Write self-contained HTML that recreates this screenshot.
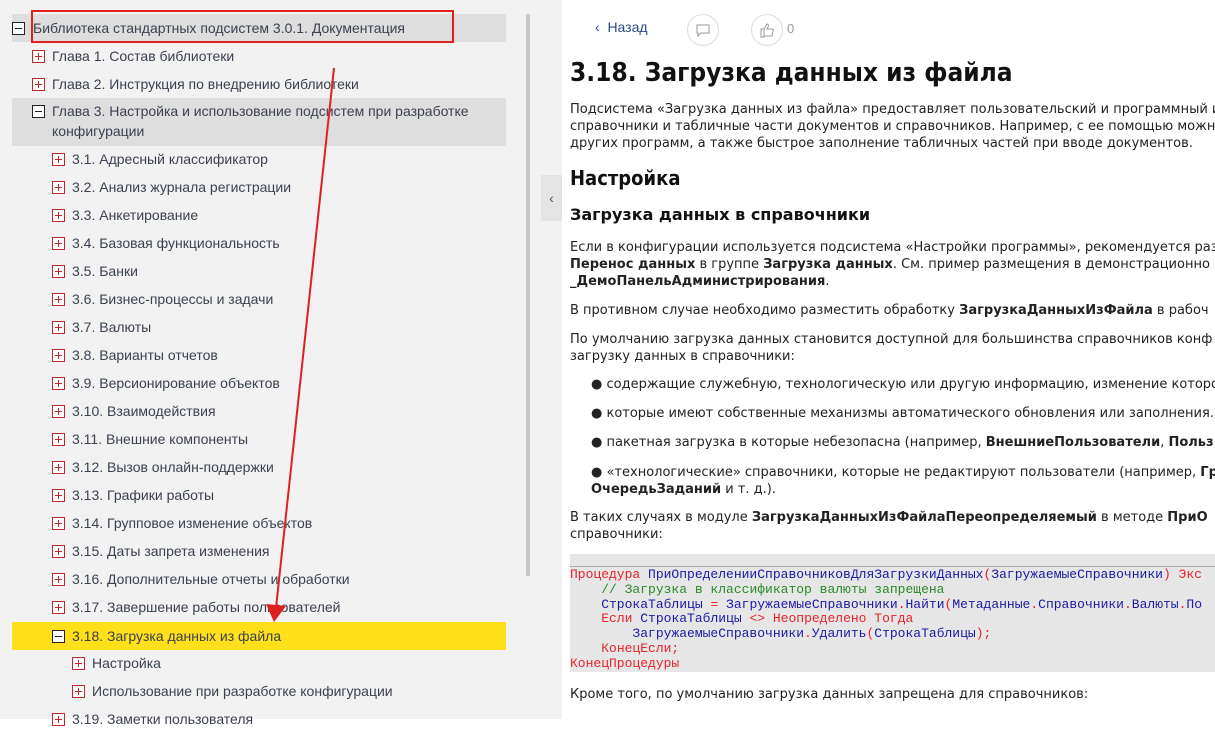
<!DOCTYPE html>
<html><head><meta charset="utf-8"><style>
*{margin:0;padding:0;box-sizing:border-box}
body{width:1215px;height:719px;overflow:hidden;background:#fff;font-family:"Liberation Sans","DejaVu Sans",sans-serif;position:relative}
#left{position:absolute;left:0;top:0;width:562px;height:719px;background:#f2f2f2}
.row{position:absolute;left:12px;width:494px;height:28px;font-size:14px;color:#3b4150;line-height:28px;white-space:nowrap}
.box{position:absolute;top:8px;width:13px;height:13px;border:1px solid #c4262e;background:#fff}
.box:before{content:"";position:absolute;left:2px;top:5px;width:7px;height:1px;background:#c4262e}
.box.p:after{content:"";position:absolute;left:5px;top:2px;width:1px;height:7px;background:#c4262e}
.box.m{border-color:#222}.box.m:before{background:#222}
.t{position:absolute;top:0}
#sb{position:absolute;left:526px;top:14px;width:4px;height:562px;background:#c8c8c8}
#tab{position:absolute;left:541px;top:175px;width:21px;height:46px;background:#e4e4e4;color:#555;font-size:14px;text-align:center;line-height:46px}
#right{position:absolute;left:570px;top:0;width:700px;color:#222;font-size:13px;line-height:17px;font-family:"DejaVu Sans","Liberation Sans",sans-serif}
.a{position:absolute;white-space:nowrap}
b{font-weight:bold}
.code{position:absolute;left:570px;top:554px;width:645px;height:118px;background:#e6e6e6;overflow:hidden}
.code pre{position:absolute;left:0;top:12px;border-top:1px solid #aaa;width:645px;padding-top:1px;font-family:"Liberation Mono",monospace;font-size:13px;line-height:14.8px;color:#1a1aa6}
.r{color:#e8242a}.g{color:#2a8a2a}
.circ{position:absolute;width:32px;height:32px;border:1px solid #ddd;border-radius:50%}
</style></head><body>
<div id="left">
<div class="row" style="top:14px;background:#dedede"><span class="box m" style="left:0"></span><span class="t" style="left:21px">Библиотека стандартных подсистем 3.0.1. Документация</span></div>
<div class="row" style="top:42px"><span class="box p" style="left:20px"></span><span class="t" style="left:40px">Глава 1. Состав библиотеки</span></div>
<div class="row" style="top:70px"><span class="box p" style="left:20px"></span><span class="t" style="left:40px">Глава 2. Инструкция по внедрению библиотеки</span></div>
<div class="row" style="top:98px;height:48px;background:#dedede;line-height:20px"><span class="box m" style="left:20px;top:7px"></span><span class="t" style="left:40px;top:3px">Глава 3. Настройка и использование подсистем при разработке<br>конфигурации</span></div>
<div class="row" style="top:145px"><span class="box p" style="left:40px"></span><span class="t" style="left:60px">3.1. Адресный классификатор</span></div>
<div class="row" style="top:173px"><span class="box p" style="left:40px"></span><span class="t" style="left:60px">3.2. Анализ журнала регистрации</span></div>
<div class="row" style="top:201px"><span class="box p" style="left:40px"></span><span class="t" style="left:60px">3.3. Анкетирование</span></div>
<div class="row" style="top:229px"><span class="box p" style="left:40px"></span><span class="t" style="left:60px">3.4. Базовая функциональность</span></div>
<div class="row" style="top:257px"><span class="box p" style="left:40px"></span><span class="t" style="left:60px">3.5. Банки</span></div>
<div class="row" style="top:285px"><span class="box p" style="left:40px"></span><span class="t" style="left:60px">3.6. Бизнес-процессы и задачи</span></div>
<div class="row" style="top:313px"><span class="box p" style="left:40px"></span><span class="t" style="left:60px">3.7. Валюты</span></div>
<div class="row" style="top:341px"><span class="box p" style="left:40px"></span><span class="t" style="left:60px">3.8. Варианты отчетов</span></div>
<div class="row" style="top:369px"><span class="box p" style="left:40px"></span><span class="t" style="left:60px">3.9. Версионирование объектов</span></div>
<div class="row" style="top:397px"><span class="box p" style="left:40px"></span><span class="t" style="left:60px">3.10. Взаимодействия</span></div>
<div class="row" style="top:425px"><span class="box p" style="left:40px"></span><span class="t" style="left:60px">3.11. Внешние компоненты</span></div>
<div class="row" style="top:453px"><span class="box p" style="left:40px"></span><span class="t" style="left:60px">3.12. Вызов онлайн-поддержки</span></div>
<div class="row" style="top:481px"><span class="box p" style="left:40px"></span><span class="t" style="left:60px">3.13. Графики работы</span></div>
<div class="row" style="top:509px"><span class="box p" style="left:40px"></span><span class="t" style="left:60px">3.14. Групповое изменение объектов</span></div>
<div class="row" style="top:537px"><span class="box p" style="left:40px"></span><span class="t" style="left:60px">3.15. Даты запрета изменения</span></div>
<div class="row" style="top:565px"><span class="box p" style="left:40px"></span><span class="t" style="left:60px">3.16. Дополнительные отчеты и обработки</span></div>
<div class="row" style="top:593px"><span class="box p" style="left:40px"></span><span class="t" style="left:60px">3.17. Завершение работы пользователей</span></div>
<div class="row" style="top:622px;background:#ffe01b"><span class="box m" style="left:40px"></span><span class="t" style="left:60px">3.18. Загрузка данных из файла</span></div>
<div class="row" style="top:649px"><span class="box p" style="left:60px"></span><span class="t" style="left:80px">Настройка</span></div>
<div class="row" style="top:677px"><span class="box p" style="left:60px"></span><span class="t" style="left:80px">Использование при разработке конфигурации</span></div>
<div class="row" style="top:705px"><span class="box p" style="left:40px"></span><span class="t" style="left:60px">3.19. Заметки пользователя</span></div>
<div id="sb"></div>
<div id="tab">‹</div>
</div>
<svg style="position:absolute;left:0;top:0" width="1215" height="719">
<rect x="32" y="11" width="421" height="31" fill="none" stroke="#e02020" stroke-width="2"/>
<line x1="334" y1="68" x2="276" y2="608" stroke="#e02020" stroke-width="2"/>
<polygon points="266,604 286,606 274,622" fill="#e02020"/>
</svg>
<div class="a" style="left:595px;top:19px;font-size:14px;color:#2b4a8a;font-family:'Liberation Sans',sans-serif">‹&nbsp;&nbsp;Назад</div>
<div class="circ" style="left:687px;top:14px"><svg width="30" height="30"><path d="M9 10h12v8h-8l-3 3v-3h-1z" fill="none" stroke="#999" stroke-width="1"/></svg></div>
<div class="circ" style="left:751px;top:14px"><svg width="30" height="30"><path d="M9 14h3v8h-3zM12 14l3-5c1 0 2 1 1 3l-1 2h5c1 0 2 1 1 2l-1 5h-8" fill="none" stroke="#999" stroke-width="1"/></svg></div>
<div class="a" style="left:787px;top:21px;font-size:13px;color:#999">0</div>
<div id="right">
<div class="a" style="top:56px;font-size:26px;line-height:34px;font-weight:bold;color:#111;font-family:'DejaVu Sans Condensed',sans-serif">3.18. Загрузка данных из файла</div>
<div class="a" style="top:101px">Подсистема «Загрузка данных из файла» предоставляет пользовательский и программный и<br>справочники и табличные части документов и справочников. Например, с ее помощью можн<br>других программ, а также быстрое заполнение табличных частей при вводе документов.</div>
<div class="a" style="top:166px;font-size:20px;line-height:24px;font-weight:bold;color:#111;font-family:'DejaVu Sans Condensed',sans-serif">Настройка</div>
<div class="a" style="top:205px;font-size:16px;line-height:20px;font-weight:bold;color:#111">Загрузка данных в справочники</div>
<div class="a" style="top:239px">Если в конфигурации используется подсистема «Настройки программы», рекомендуется раз<br><b>Перенос данных</b> в группе <b>Загрузка данных</b>. См. пример размещения в демонстрационно<br><b>_ДемоПанельАдминистрирования</b>.</div>
<div class="a" style="top:302px">В противном случае необходимо разместить обработку <b>ЗагрузкаДанныхИзФайла</b> в рабоч</div>
<div class="a" style="top:331px">По умолчанию загрузка данных становится доступной для большинства справочников конф<br>загрузку данных в справочники:</div>
<div class="a" style="top:376px;left:21px">● содержащие служебную, технологическую или другую информацию, изменение которо</div>
<div class="a" style="top:405px;left:21px">● которые имеют собственные механизмы автоматического обновления или заполнения.</div>
<div class="a" style="top:434px;left:21px">● пакетная загрузка в которые небезопасна (например, <b>ВнешниеПользователи</b>, <b>Польз</b></div>
<div class="a" style="top:464px;left:21px">● «технологические» справочники, которые не редактируют пользователи (например, <b>Гр</b><br><b>ОчередьЗаданий</b> и т. д.).</div>
<div class="a" style="top:509px">В таких случаях в модуле <b>ЗагрузкаДанныхИзФайлаПереопределяемый</b> в методе <b>ПриО</b><br>справочники:</div>
<div class="a" style="top:686px">Кроме того, по умолчанию загрузка данных запрещена для справочников:</div>
</div>
<div class="code"><pre><span class="r">Процедура</span> ПриОпределенииСправочниковДляЗагрузкиДанных<span class="r">(</span>ЗагружаемыеСправочники<span class="r">) Экс</span>
    <span class="g">// Загрузка в классификатор валюты запрещена</span>
    СтрокаТаблицы <span class="r">=</span> ЗагружаемыеСправочники<span class="r">.</span>Найти<span class="r">(</span>Метаданные<span class="r">.</span>Справочники<span class="r">.</span>Валюты<span class="r">.</span>По
    <span class="r">Если</span> СтрокаТаблицы <span class="r">&lt;&gt; Неопределено Тогда</span>
        ЗагружаемыеСправочники<span class="r">.</span>Удалить<span class="r">(</span>СтрокаТаблицы<span class="r">);</span>
    <span class="r">КонецЕсли;</span>
<span class="r">КонецПроцедуры</span></pre></div>
</body></html>
